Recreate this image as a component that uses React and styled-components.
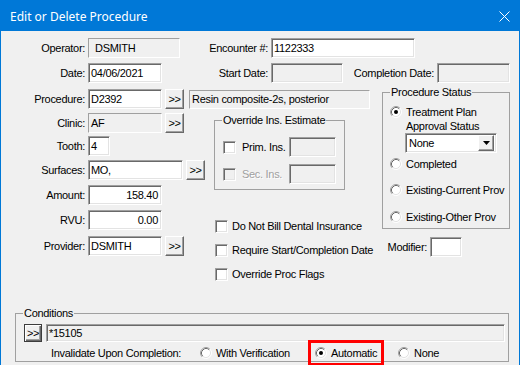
import React from "react";
import styled, { createGlobalStyle, css } from "styled-components";

const GlobalStyle = createGlobalStyle`
  body {
    margin: 0;
    background: #ffffff;
    font-family: "Liberation Sans", Arial, sans-serif;
    font-size: 11px;
    letter-spacing: -0.3px;
    color: #000;
  }
`;

const Window = styled.div`
  width: 520px;
  height: 365px;
  box-sizing: border-box;
  border: 1px solid #0078d7;
  border-bottom: none;
  background: #f0f0f0;
  display: flex;
  flex-direction: column;
`;

const TitleBar = styled.div`
  height: 30px;
  flex-shrink: 0;
  background: #0078d7;
  display: flex;
  align-items: center;
  justify-content: space-between;
  padding: 0 9px 0 9px;
  color: #fff;
  font-family: "Segoe UI", "Noto Sans", sans-serif;
  font-size: 12px;
  letter-spacing: 0;
`;

const Body = styled.div`
  flex: 1;
  padding-top: 7px;
  display: flex;
  flex-direction: column;
`;

const Row = styled.div`
  display: flex;
  align-items: center;
  height: ${(p) => p.$h || 20}px;
  margin-top: ${(p) => p.$mt || 0}px;
  margin-left: ${(p) => p.$ml || 0}px;
`;

const Label = styled.span`
  width: ${(p) => p.$w}px;
  flex-shrink: 0;
  box-sizing: border-box;
  text-align: ${(p) => (p.$left ? "left" : "right")};
  padding-right: 3px;
  white-space: nowrap;
`;

const sunken = css`
  border: 1px solid;
  border-color: #a0a0a0 #ffffff #ffffff #a0a0a0;
  box-shadow: inset 1px 1px 0 #696969, inset -1px -1px 0 #e3e3e3;
`;

const kinds = {
  edit: css`
    ${sunken};
    background: #ffffff;
  `,
  disabled: css`
    ${sunken};
    background: #f0f0f0;
  `,
  static: css`
    border: 1px solid;
    border-color: #a0a0a0 #ffffff #ffffff #a0a0a0;
    background: #f0f0f0;
  `,
};

const Field = styled.div`
  box-sizing: border-box;
  width: ${(p) => p.$w}px;
  height: ${(p) => p.$h || 20}px;
  flex-shrink: 0;
  display: flex;
  align-items: center;
  justify-content: ${(p) => (p.$right ? "flex-end" : "flex-start")};
  padding: 0 ${(p) => (p.$right ? 3 : 0)}px 0 ${(p) => p.$pl ?? 2}px;
  margin-left: ${(p) => p.$ml || 0}px;
  white-space: nowrap;
  overflow: hidden;
  ${(p) => kinds[p.$kind || "edit"]}
`;

const Button = styled.div`
  box-sizing: border-box;
  width: ${(p) => p.$w || 19}px;
  height: ${(p) => p.$h || 20}px;
  flex-shrink: 0;
  margin-left: ${(p) => p.$ml || 0}px;
  display: flex;
  align-items: center;
  justify-content: center;
  background: #f0f0f0;
  ${(p) =>
    p.$default
      ? css`
          border: 1px solid #3c3c3c;
          box-shadow: inset 1px 1px 0 #ffffff, inset -1px -1px 0 #696969,
            inset -2px -2px 0 #a0a0a0;
        `
      : css`
          border: 1px solid;
          border-color: #ffffff #696969 #696969 #ffffff;
          box-shadow: inset -1px -1px 0 #a0a0a0;
        `}
`;

const Lower = styled.div`
  display: flex;
  margin-top: 3px;
`;

const Column = styled.div`
  width: ${(p) => p.$w}px;
  flex-shrink: 0;
  display: flex;
  flex-direction: column;
`;

const GroupBox = styled.fieldset`
  box-sizing: border-box;
  margin: ${(p) => p.$mt || 0}px 0 0 ${(p) => p.$ml || 0}px;
  width: ${(p) => p.$w}px;
  height: ${(p) => p.$h}px;
  flex-shrink: 0;
  min-width: 0;
  padding: 0 ${(p) => p.$pr || 0}px 0 ${(p) => p.$pl || 7}px;
  border: 1px solid #a0a0a0;

  legend {
    padding: 0 1px;
    margin-left: ${(p) => 7 - (p.$pl || 7)}px;
    line-height: 13px;
  }
`;

const CheckBox = styled.span`
  box-sizing: border-box;
  width: 13px;
  height: 13px;
  flex-shrink: 0;
  ${sunken};
  background: ${(p) => (p.$disabled ? "#f0f0f0" : "#ffffff")};
`;

const CheckText = styled.span`
  width: ${(p) => (p.$w ? `${p.$w}px` : "auto")};
  flex-shrink: 0;
  box-sizing: border-box;
  padding-left: ${(p) => p.$gap || 4}px;
  white-space: nowrap;
  ${(p) =>
    p.$disabled &&
    css`
      color: #a0a0a0;
      text-shadow: 1px 1px 0 #ffffff;
    `}
`;

const Option = styled.div`
  display: flex;
  align-items: ${(p) => (p.$top ? "flex-start" : "center")};
  width: ${(p) => (p.$w ? `${p.$w}px` : "auto")};
  flex-shrink: 0;
  margin-top: ${(p) => p.$mt || 0}px;
  line-height: 14px;
  position: relative;

  svg {
    flex-shrink: 0;
    margin-top: ${(p) => (p.$top ? 1 : 0)}px;
  }

  ${(p) =>
    p.$highlight &&
    css`
      &::after {
        content: "";
        position: absolute;
        left: -7px;
        right: 14px;
        top: -6px;
        bottom: -6px;
        border: 3px solid #ff0000;
      }
    `}
`;

const OptionText = styled.span`
  padding-left: 4px;
  white-space: nowrap;
`;

const Select = styled(Field)`
  margin-left: 15px;
  padding-left: 3px;
  justify-content: space-between;
  padding-right: 2px;
`;

const SelectArrow = styled(Button)`
  width: 16px;
  height: 16px;
`;

const Conditions = styled(GroupBox)`
  margin-top: auto;
  margin-bottom: 3px;
`;

function Radio({ checked }) {
  return (
    <svg width="12" height="12" viewBox="0 0 12 12">
      <circle cx="6" cy="6" r="5" fill="#ffffff" />
      <path d="M2.11 9.89A5.5 5.5 0 0 1 9.89 2.11" stroke="#a0a0a0" fill="none" />
      <path d="M9.89 2.11A5.5 5.5 0 0 1 2.11 9.89" stroke="#ffffff" fill="none" />
      <path d="M2.82 9.18A4.5 4.5 0 0 1 9.18 2.82" stroke="#696969" fill="none" />
      <path d="M9.18 2.82A4.5 4.5 0 0 1 2.82 9.18" stroke="#e3e3e3" fill="none" />
      {checked && <circle cx="6" cy="6" r="2" fill="#000000" />}
    </svg>
  );
}

function CloseIcon() {
  return (
    <svg width="11" height="11" viewBox="0 0 11 11">
      <path d="M0.5 0.5L10.5 10.5M10.5 0.5L0.5 10.5" stroke="#ffffff" strokeWidth="1" />
    </svg>
  );
}

function DownArrow() {
  return (
    <svg width="7" height="4" viewBox="0 0 7 4">
      <path d="M0 0H7L3.5 4Z" fill="#000000" />
    </svg>
  );
}

export default function App() {
  return (
    <>
      <GlobalStyle />
      <Window>
        <TitleBar>
          <span>Edit or Delete Procedure</span>
          <CloseIcon />
        </TitleBar>
        <Body>
          <Row>
            <Label $w={87}>Operator:</Label>
            <Field $kind="static" $w={92} $pl={6}>DSMITH</Field>
            <Label $w={91}>Encounter #:</Label>
            <Field $w={144}>1122333</Field>
          </Row>
          <Row $mt={5}>
            <Label $w={87}>Date:</Label>
            <Field $w={74}>04/06/2021</Field>
            <Label $w={109}>Start Date:</Label>
            <Field $kind="disabled" $w={72} />
            <Label $w={94}>Completion Date:</Label>
            <Field $kind="disabled" $w={73} />
          </Row>

          <Lower>
            <Column $w={205}>
              <Row $mt={3}>
                <Label $w={87}>Procedure:</Label>
                <Field $w={74}>D2392</Field>
                <Button $ml={3}>&gt;&gt;</Button>
                <Field $kind="static" $w={181} $h={19} $ml={5}>
                  Resin composite-2s, posterior
                </Field>
              </Row>
              <Row $mt={4}>
                <Label $w={87}>Clinic:</Label>
                <Field $kind="static" $w={74}>AF</Field>
                <Button $ml={3}>&gt;&gt;</Button>
              </Row>
              <Row $mt={3}>
                <Label $w={87}>Tooth:</Label>
                <Field $w={22}>4</Field>
              </Row>
              <Row $mt={4}>
                <Label $w={87}>Surfaces:</Label>
                <Field $w={95}>MO,</Field>
                <Button $ml={3}>&gt;&gt;</Button>
              </Row>
              <Row $mt={5}>
                <Label $w={87}>Amount:</Label>
                <Field $w={74} $right>158.40</Field>
              </Row>
              <Row $mt={5}>
                <Label $w={87}>RVU:</Label>
                <Field $w={74} $right>0.00</Field>
              </Row>
              <Row $mt={6}>
                <Label $w={87}>Provider:</Label>
                <Field $w={74}>DSMITH</Field>
                <Button $ml={3}>&gt;&gt;</Button>
              </Row>
            </Column>

            <Column $w={176}>
              <GroupBox $mt={28} $ml={8} $w={131} $h={76} $pl={8}>
                <legend>Override Ins. Estimate</legend>
                <Row $mt={10}>
                  <CheckBox />
                  <CheckText $w={53} $gap={6}>Prim. Ins.</CheckText>
                  <Field $kind="disabled" $w={47} />
                </Row>
                <Row $mt={7}>
                  <CheckBox $disabled />
                  <CheckText $w={53} $gap={6} $disabled>Sec. Ins.</CheckText>
                  <Field $kind="disabled" $w={47} />
                </Row>
              </GroupBox>
              <Row $h={14} $mt={29} $ml={9}>
                <CheckBox />
                <CheckText>Do Not Bill Dental Insurance</CheckText>
              </Row>
              <Row $h={14} $mt={10} $ml={9}>
                <CheckBox />
                <CheckText>Require Start/Completion Date</CheckText>
              </Row>
              <Row $h={14} $mt={10} $ml={9}>
                <CheckBox />
                <CheckText>Override Proc Flags</CheckText>
              </Row>
            </Column>

            <Column $w={128}>
              <GroupBox $w={128} $h={143} $pl={7}>
                <legend>Procedure Status</legend>
                <Option $top $mt={6}>
                  <Radio checked />
                  <OptionText>
                    Treatment Plan
                    <br />
                    Approval Status
                  </OptionText>
                </Option>
                <Select $w={92}>
                  None
                  <SelectArrow>
                    <DownArrow />
                  </SelectArrow>
                </Select>
                <Option $mt={4}>
                  <Radio />
                  <OptionText>Completed</OptionText>
                </Option>
                <Option $mt={12}>
                  <Radio />
                  <OptionText>Existing-Current Prov</OptionText>
                </Option>
                <Option $mt={13}>
                  <Radio />
                  <OptionText>Existing-Other Prov</OptionText>
                </Option>
              </GroupBox>
              <Row $mt={8}>
                <Label $w={48}>Modifier:</Label>
                <Field $w={32} />
              </Row>
            </Column>
          </Lower>

          <Conditions $ml={14} $w={494} $h={55} $pl={8} $pr={3}>
            <legend>Conditions</legend>
            <Row $h={18} $mt={4}>
              <Button $default $w={18} $h={18}>&gt;&gt;</Button>
              <Field $kind="disabled" $w={459} $h={18} $ml={4}>*15105</Field>
            </Row>
            <Row $h={14} $mt={4} $ml={27}>
              <Label $w={149} $left>Invalidate Upon Completion:</Label>
              <Option $w={115}>
                <Radio />
                <OptionText>With Verification</OptionText>
              </Option>
              <Option $w={83} $highlight>
                <Radio checked />
                <OptionText>Automatic</OptionText>
              </Option>
              <Option>
                <Radio />
                <OptionText>None</OptionText>
              </Option>
            </Row>
          </Conditions>
        </Body>
      </Window>
    </>
  );
}
